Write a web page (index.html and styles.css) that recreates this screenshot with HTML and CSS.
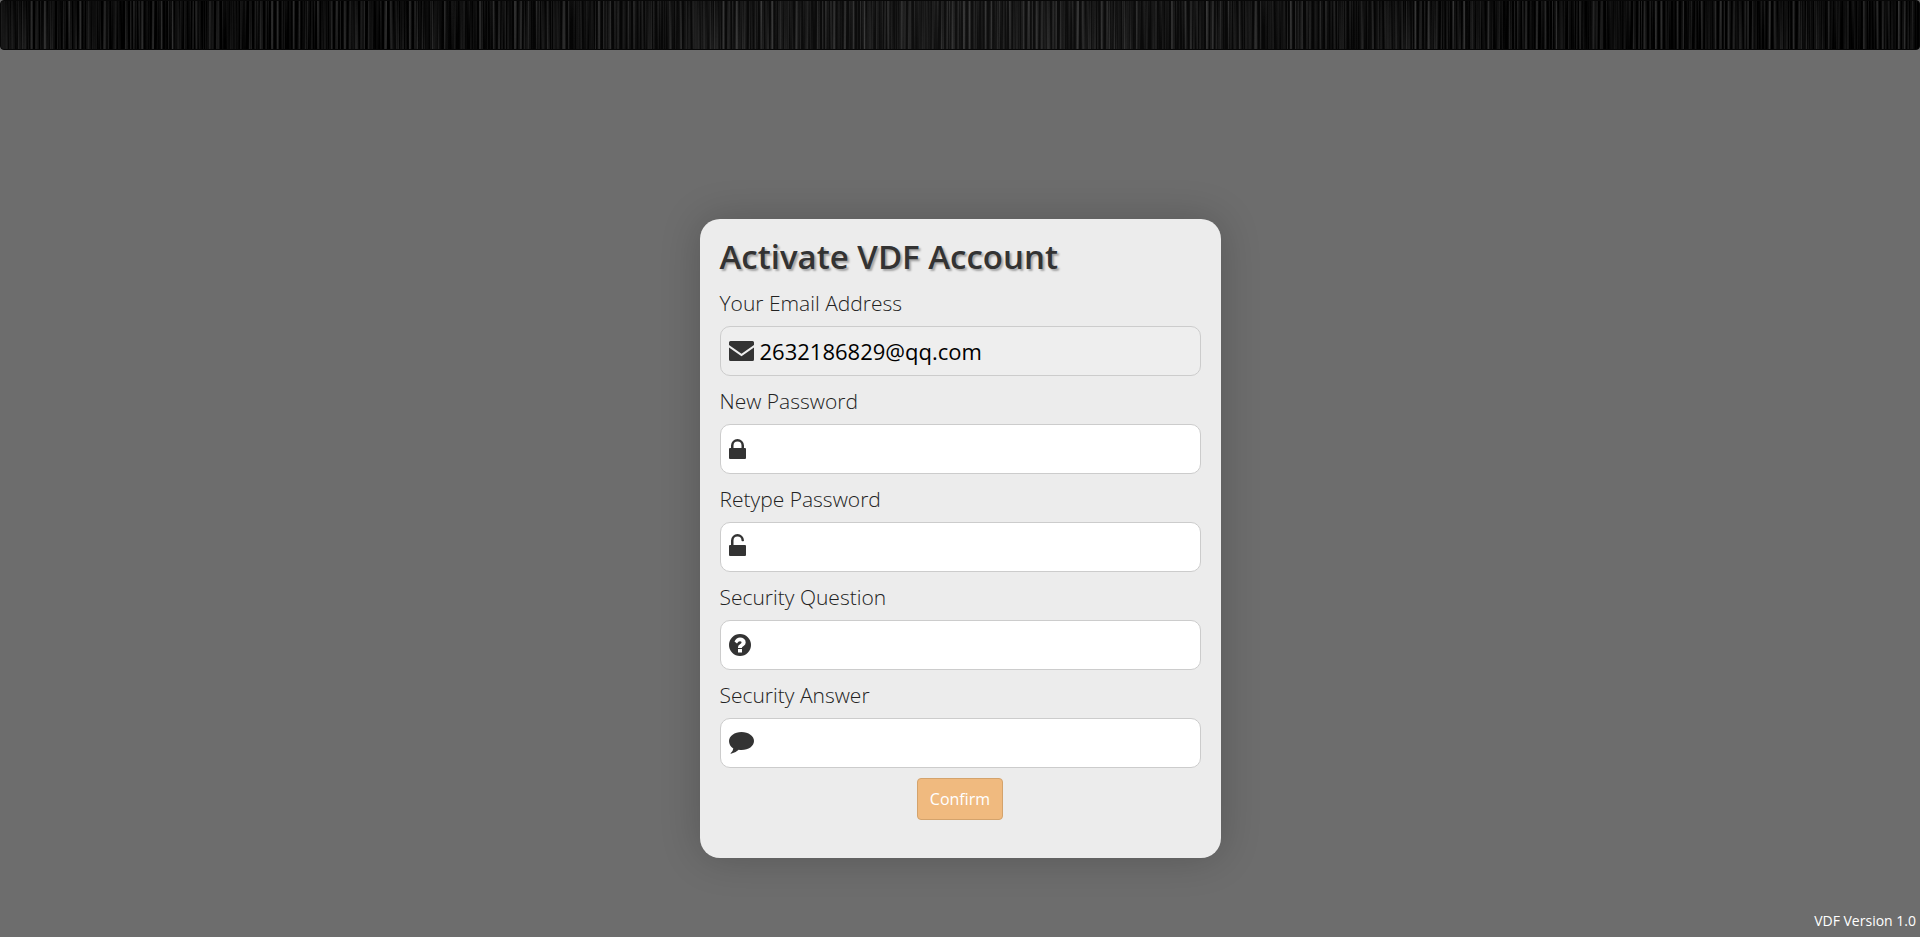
FILE: index.html
```html
<!DOCTYPE html>
<html lang="en">
<head>
<meta charset="utf-8">
<title>Activate VDF Account</title>
<link rel="stylesheet" href="styles.css">
</head>
<body>
<header class="topbar">
  <svg class="grain" aria-hidden="true">
    <filter id="grain" x="0" y="0" width="100%" height="100%" color-interpolation-filters="sRGB">
      <feTurbulence type="fractalNoise" baseFrequency="0.37 0.003" numOctaves="3" seed="7"/>
      <feColorMatrix values="0.34 0.34 0 0 -0.295  0.34 0.34 0 0 -0.295  0.34 0.34 0 0 -0.295  0 0 0 0 1"/>
    </filter>
    <rect width="100%" height="100%" filter="url(#grain)"/>
  </svg>
</header>
<main class="stage">
  <form class="card">
    <h1 class="title">Activate VDF Account</h1>
    <label class="label" for="email">Your Email Address</label>
    <div class="field field-readonly">
      <svg class="icon" viewBox="0 0 25 20" aria-hidden="true"><path d="M1.500 0h22Q25 0 25 1.500V4L12.500 12.800 0 4V1.500Q0 0 1.500 0zM0 6.500l12.500 8.800L25 6.500v12q0 1.500-1.500 1.500h-22Q0 20 0 18.500z"/></svg>
      <input class="input" id="email" type="email" value="2632186829@qq.com" readonly>
    </div>
    <label class="label" for="password">New Password</label>
    <div class="field">
      <svg class="icon" viewBox="0 0 17 20" aria-hidden="true"><path d="M1 9h1V6.500a6.500 6.500 0 0 1 13 0V9h1q1 0 1 1v9q0 1-1 1H1q-1 0-1-1v-9q0-1 1-1zm3.500 0h8V6.500a4 4 0 0 0-8 0z"/></svg>
      <input class="input" id="password" type="password">
    </div>
    <label class="label" for="retype">Retype Password</label>
    <div class="field">
      <svg class="icon icon-raised" viewBox="0 0 17 22" aria-hidden="true"><path d="M1 11h1V6.500a6.500 6.500 0 0 1 13 0q0 .8-.8.8h-.9q-.8 0-.8-.8a4 4 0 0 0-8 0V11H16q1 0 1 1v9q0 1-1 1H1q-1 0-1-1v-9q0-1 1-1z"/></svg>
      <input class="input" id="retype" type="password">
    </div>
    <label class="label" for="question">Security Question</label>
    <div class="field">
      <svg class="icon icon-tall" viewBox="0 0 22 22" aria-hidden="true"><path fill-rule="evenodd" d="M11 0a11 11 0 1 1 0 22 11 11 0 0 1 0-22zM9 15v3.500h4V15zM5.500 7.500L8 9.400q1.300-2.100 2.900-2.100 1.700 0 1.700 1.300 0 .8-1.600 1.700Q9 11.500 9 13.200v.8h3.800q0-1.100 1.800-2.100 2.100-1.300 2.100-3.500 0-2.200-1.800-3.600-1.600-1.200-3.900-1.200-3.600 0-5.500 3.900z"/></svg>
      <input class="input" id="question" type="text">
    </div>
    <label class="label" for="answer">Security Answer</label>
    <div class="field">
      <svg class="icon icon-tall" viewBox="0 0 25 22" aria-hidden="true"><path d="M12.500 0C19.500 0 25 4 25 9s-5.500 9-12.500 9q-1.500 0-2.800-.2Q6.500 21 2 21.800q-.6 0-.4-.6Q4 19.500 4.300 16.500 0 13.600 0 9c0-5 5.500-9 12.500-9z"/></svg>
      <input class="input" id="answer" type="text">
    </div>
    <button class="confirm" type="submit">Confirm</button>
  </form>
</main>
<footer class="version">VDF Version 1.0</footer>
</body>
</html>
```
FILE: styles.css
```css
* { box-sizing: border-box; }
body {
  margin: 0;
  min-height: 100vh;
  display: flex;
  flex-direction: column;
  background: #6d6d6d;
  color: #333;
  font-family: "Open Sans", "Noto Sans", sans-serif;
}
.topbar {
  display: grid;
  height: 50px;
  border: 1px solid #080808;
  border-radius: 4px;
  overflow: hidden;
  background: #080808;
}
.topbar::after {
  content: "";
  grid-area: 1 / 1;
  background: linear-gradient(90deg, rgba(255,255,255,0) 20%, rgba(255,255,255,.06) 50%, rgba(255,255,255,0) 80%);
}
.grain { grid-area: 1 / 1; width: 100%; height: 100%; }
.stage {
  flex: 1;
  display: flex;
  justify-content: center;
  align-items: center;
  padding-top: 118px;
}
.card {
  display: flex;
  flex-direction: column;
  width: 521px;
  padding: 18px 20px 38px;
  border-radius: 20px;
  background: #ececec;
  box-shadow: 0 0 40px rgba(0,0,0,.2);
}
.title {
  margin: 0;
  font-size: 33px;
  line-height: 40px;
  font-weight: 600;
  text-shadow: 2px 2px 2px rgba(0,0,0,.3);
}
.label {
  padding-top: 11px;
  padding-bottom: 9px;
  color: #222;
  font-size: 21px;
  line-height: 28px;
  font-weight: 300;
}
.title + .label { padding-top: 12px; }
.field {
  display: flex;
  align-items: center;
  gap: 6px;
  height: 50px;
  padding: 0 8px;
  border: 1px solid #ccc;
  border-radius: 10px;
  background: #fff;
}
.field-readonly { background: #eee; }
.icon { flex: none; height: 20px; fill: #333; }
.icon-tall { height: 22px; }
.icon-raised { height: 22px; margin-bottom: 4px; }
.input {
  flex: 1;
  min-width: 0;
  border: 0;
  outline: 0;
  padding: 0;
  background: transparent;
  color: #000;
  font: 400 22px/28px "Open Sans", "Noto Sans", sans-serif;
}
.confirm {
  align-self: center;
  margin-top: 10px;
  width: 86px;
  height: 42px;
  padding: 0;
  border: 1px solid #d4a36c;
  border-radius: 4px;
  background: #f0ba7f;
  color: #fff;
  font: 400 16px/24px "Open Sans", "Noto Sans", sans-serif;
}
.version {
  padding: 0 4px 4px;
  text-align: right;
  color: #fff;
  font-size: 14px;
  line-height: 24px;
}
```
